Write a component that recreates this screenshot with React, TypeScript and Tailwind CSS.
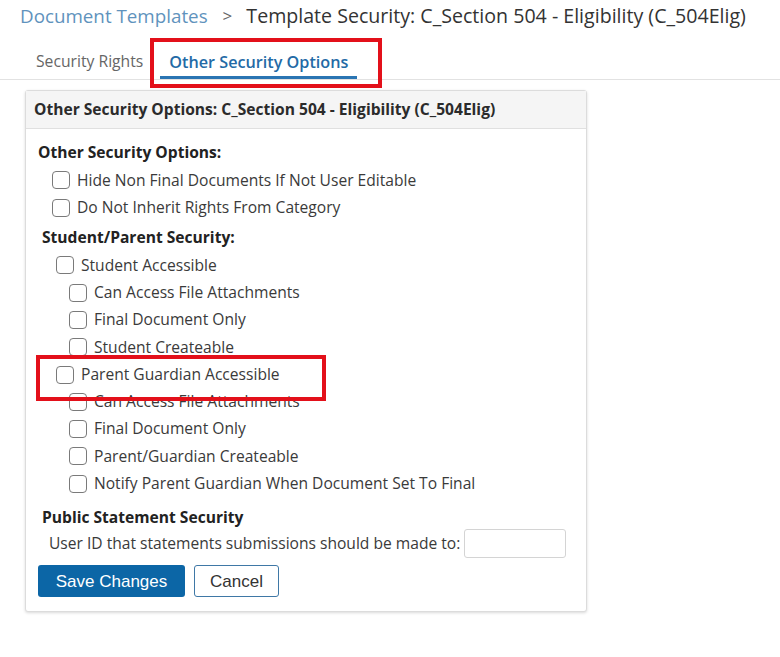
import React from "react";

const Box = () => (
  <span className="inline-block w-[18px] h-[18px] rounded-[4px] border-[1.5px] border-[#7a7a7a] bg-white shrink-0" />
);

const Row = ({ pl, children }: { pl: string; children: React.ReactNode }) => (
  <div className={`flex items-center h-[27.3px] ${pl}`}>
    <Box />
    <span className="ml-[7px] text-[15.6px] text-[#3a3a3a] whitespace-nowrap">{children}</span>
  </div>
);

export default function App() {
  return (
    <div
      className="relative w-[780px] h-[657px] bg-white overflow-hidden"
      style={{ fontFamily: '"Open Sans", "Liberation Sans", sans-serif' }}
    >
      {/* Breadcrumb */}
      <div className="flex items-center h-[32px] pl-[20px] text-[18.8px] whitespace-nowrap">
        <span className="text-[#5f93bd]">Document Templates</span>
        <span className="text-[#666] ml-[15px] mr-[14px] text-[17px]">&gt;</span>
        <span className="text-[#333] text-[19.6px]">Template Security: C_Section 504 - Eligibility (C_504Elig)</span>
      </div>

      {/* Tabs */}
      <div className="flex items-end h-[48px] border-b border-[#e2e2e2] pl-[36px]">
        <div className="h-[29px] text-[15.7px] text-[#666] flex items-start">Security Rights</div>
        <div className="ml-[17px] h-[29px] px-[9px] border-b-[3px] border-[#2a75b3] text-[16.2px] font-semibold text-[#236aa6] flex items-start">
          Other Security Options
        </div>
      </div>

      {/* Panel */}
      <div className="ml-[25px] mt-[10px] w-[562px] border border-[#dcdcdc] rounded-[3px] shadow-[0_1px_3px_rgba(0,0,0,0.15)] bg-white">
        <div className="h-[38px] bg-[#f5f5f5] border-b border-[#e0e0e0] flex items-center pl-[8px] text-[15.6px] font-bold text-[#2b2b2b] whitespace-nowrap">
          Other Security Options: C_Section 504 - Eligibility (C_504Elig)
        </div>
        <div className="pt-[10.5px] pb-[14px]">
          <div className="h-[27.3px] flex items-center pl-[12px] text-[15.6px] font-bold text-[#222]">
            Other Security Options:
          </div>
          <Row pl="pl-[26px]">Hide Non Final Documents If Not User Editable</Row>
          <Row pl="pl-[26px]">Do Not Inherit Rights From Category</Row>
          <div className="mt-[3px] h-[27.3px] flex items-center pl-[16px] text-[15.6px] font-bold text-[#222]">
            Student/Parent Security:
          </div>
          <Row pl="pl-[30px]">Student Accessible</Row>
          <Row pl="pl-[43px]">Can Access File Attachments</Row>
          <Row pl="pl-[43px]">Final Document Only</Row>
          <Row pl="pl-[43px]">Student Createable</Row>
          <Row pl="pl-[30px]">Parent Guardian Accessible</Row>
          <Row pl="pl-[43px]">Can Access File Attachments</Row>
          <Row pl="pl-[43px]">Final Document Only</Row>
          <Row pl="pl-[43px]">Parent/Guardian Createable</Row>
          <Row pl="pl-[43px]">Notify Parent Guardian When Document Set To Final</Row>
          <div className="mt-[7px] h-[26px] flex items-center pl-[16px] text-[15.6px] font-bold text-[#222]">
            Public Statement Security
          </div>
          <div className="h-[26px] flex items-center pl-[23px]">
            <span className="text-[15.6px] text-[#3a3a3a] whitespace-nowrap">
              User ID that statements submissions should be made to:
            </span>
            <span className="ml-[4px] inline-block w-[102px] h-[29px] border border-[#d4d4d4] rounded-[3px] bg-white" />
          </div>
          <div className="mt-[9px] flex pl-[12px] gap-[9px]" style={{ fontFamily: '"Liberation Sans", Arial, sans-serif' }}>
            <button className="w-[147px] h-[32px] bg-[#0c66a6] text-white text-[17px] rounded-[3px]">
              Save Changes
            </button>
            <button className="w-[85px] h-[32px] bg-white border border-[#3f78a6] text-[#333] text-[17px] rounded-[3px]">
              Cancel
            </button>
          </div>
        </div>
      </div>

      {/* Red highlight boxes */}
      <div className="absolute left-[150px] top-[38px] w-[232px] h-[50px] border-[4px] border-[#e3101a]" />
      <div className="absolute left-[36px] top-[355px] w-[290px] h-[46px] border-[4px] border-[#e3101a]" />
    </div>
  );
}
